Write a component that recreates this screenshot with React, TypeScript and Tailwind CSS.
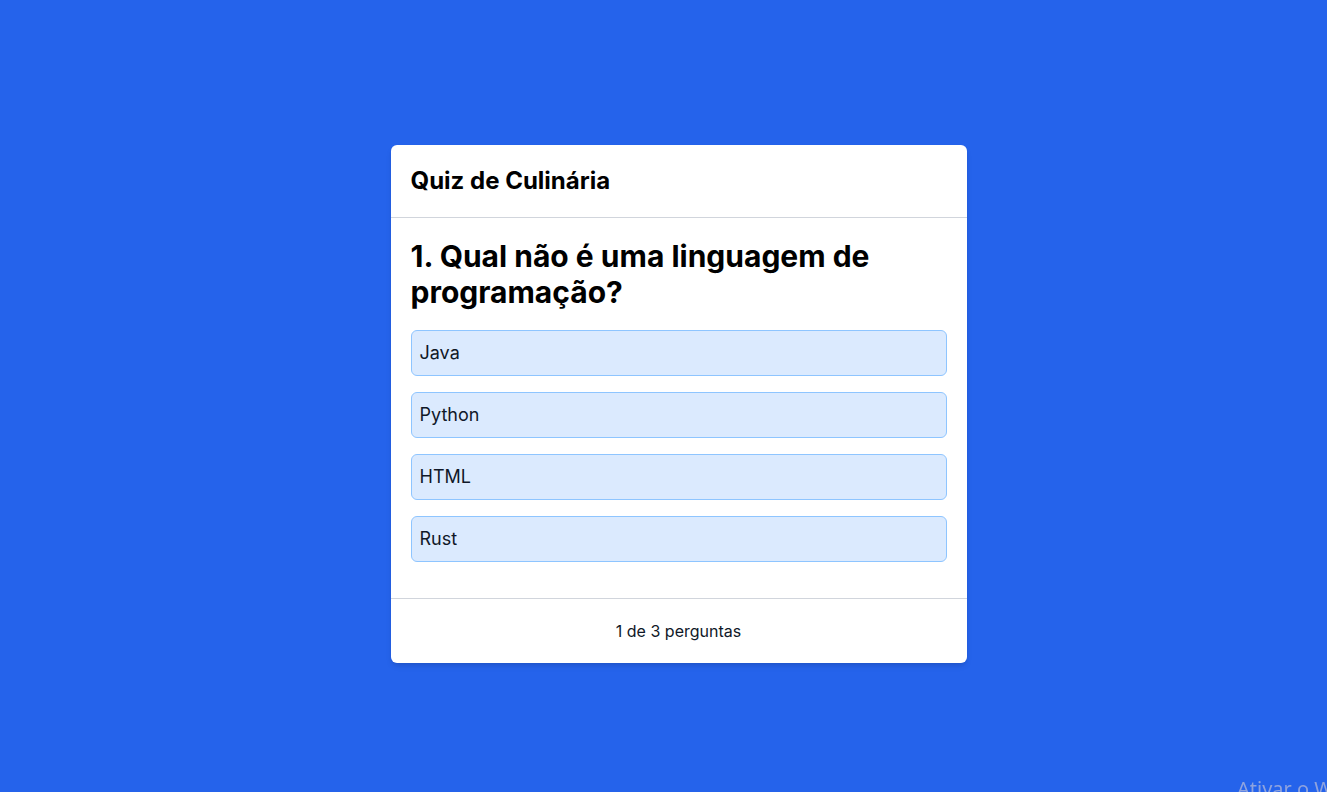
const options = ['Java', 'Python', 'HTML', 'Rust'];

export default function App() {
  return (
    <div
      className="min-h-screen bg-[#2563eb] flex justify-center pt-[145px] pl-[30px]"
      style={{ fontFamily: 'Inter, "Noto Sans", sans-serif' }}
    >
      <div className="w-[576px] self-start bg-white rounded-md shadow-md">
        {/* Header */}
        <div className="px-5 py-5 border-b border-gray-300">
          <h1 className="text-2xl leading-8 font-bold text-black">Quiz de Culinária</h1>
        </div>

        {/* Question */}
        <div className="px-5 pt-5 pb-5">
          <h2 className="text-3xl leading-9 font-bold text-black mb-5">
            1. Qual não é uma linguagem de programação?
          </h2>
          <div className="flex flex-col gap-4 mb-4">
            {options.map((opt) => (
              <button
                key={opt}
                className="w-full text-left px-2 py-2 text-lg leading-7 text-gray-900 bg-blue-100 border border-blue-300 rounded-md"
              >
                {opt}
              </button>
            ))}
          </div>
        </div>

        {/* Footer */}
        <div className="border-t border-gray-300 py-5 text-center text-base leading-6 text-gray-900">
          1 de 3 perguntas
        </div>
      </div>

      <div className="fixed inset-0 overflow-hidden pointer-events-none">
        <div
          className="absolute left-[1237px] top-[774px] whitespace-nowrap text-[20px] text-[#8fa3de]"
          style={{ fontFamily: '"Noto Sans", sans-serif' }}
        >
          Ativar o Windows
        </div>
      </div>
    </div>
  );
}
